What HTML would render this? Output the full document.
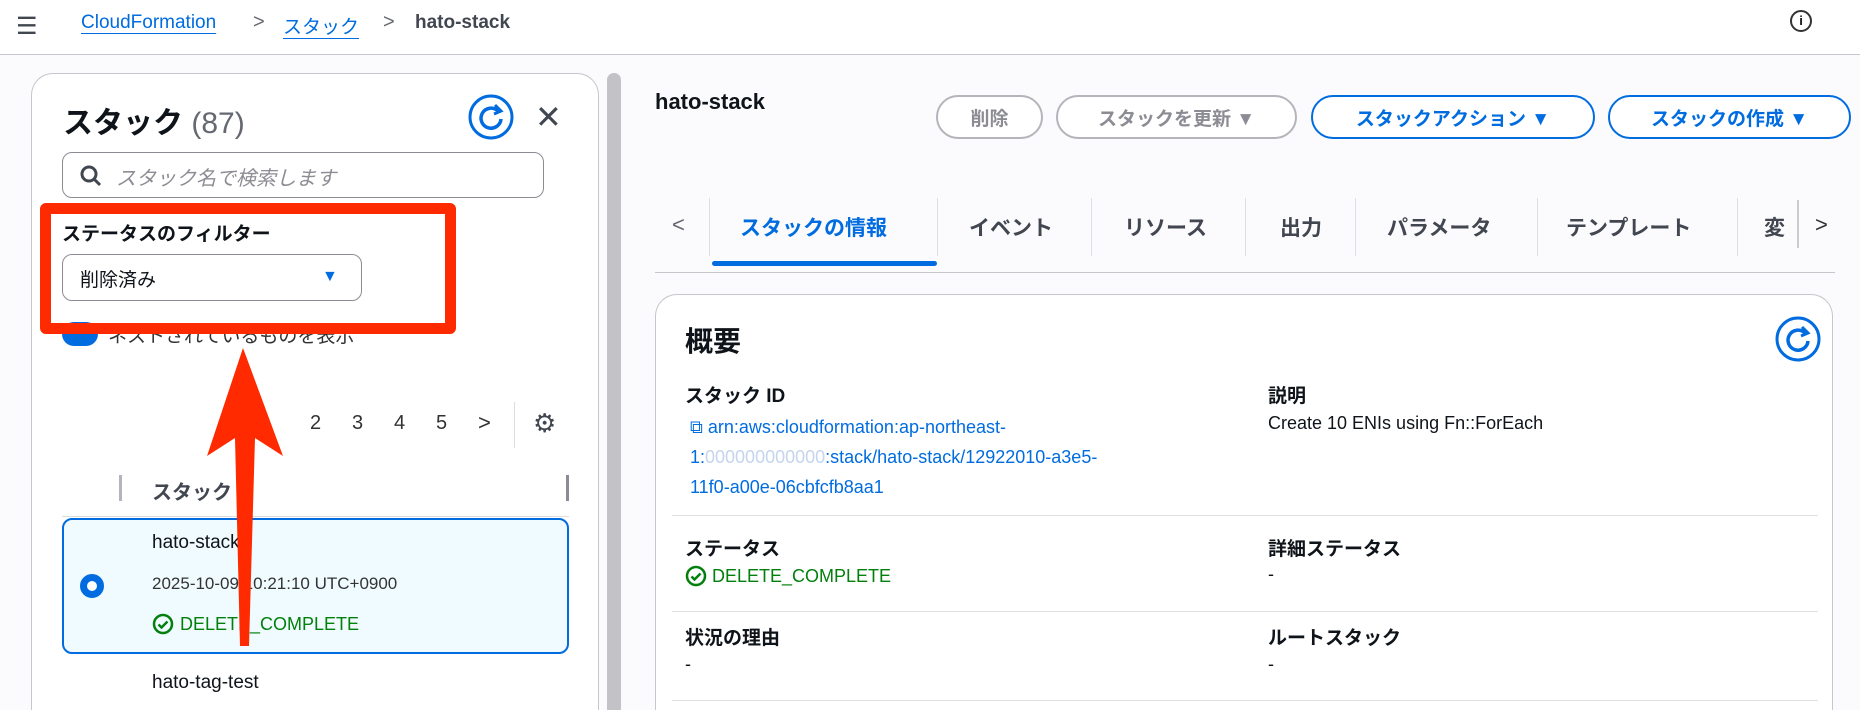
<!DOCTYPE html><html><head><meta charset="utf-8"><style>
*{box-sizing:border-box;margin:0;padding:0}
html,body{width:1860px;height:710px;overflow:hidden}
body{background:#fbfbfd;font-family:"Liberation Sans","Noto Sans CJK JP",sans-serif;color:#0f141a}
#w{position:relative;width:1860px;height:710px;overflow:hidden}
.a{position:absolute;white-space:nowrap}
.top{position:absolute;left:0;top:0;width:1860px;height:55px;background:#fff;border-bottom:1px solid #c6c6cd}
.lnk{color:#006ce0;text-decoration:underline;text-underline-offset:5px}
.btn{position:absolute;top:95px;height:44px;border-radius:22px;border:2px solid #006ce0;color:#006ce0;font-weight:bold;font-size:19px;display:flex;align-items:center;justify-content:center;background:#fff}
.btn.d{border-color:#b4b4bb;color:#8c8c94}
.tab{position:absolute;top:212px;font-size:21px;font-weight:bold;color:#424650}
.sep{position:absolute;top:198px;width:1px;height:58px;background:#dedee3}
.lbl{font-weight:bold;font-size:19px}
.v{font-size:18px}
</style></head><body><div id="w">
<div class="top"></div>
<div class="a" style="left:16px;top:12px;font-size:24px;color:#414750">☰</div>
<div class="a lnk" style="left:81px;top:12px;font-size:19px">CloudFormation</div>
<div class="a" style="left:253px;top:11px;font-size:20px;color:#656871">&gt;</div>
<div class="a lnk" style="left:283px;top:12px;font-size:19px">スタック</div>
<div class="a" style="left:383px;top:11px;font-size:20px;color:#656871">&gt;</div>
<div class="a" style="left:415px;top:12px;font-size:19px;font-weight:bold;color:#414750">hato-stack</div>
<div class="a" style="left:1790px;top:10px;width:22px;height:22px;border:2px solid #333;border-radius:50%;font-size:13px;font-weight:bold;text-align:center;line-height:18px">i</div>

<div class="a" style="left:31px;top:73px;width:568px;height:637px;background:#fff;border:1px solid #c6c6cd;border-bottom:none;border-radius:22px 22px 0 0"></div>
<div class="a" style="left:607px;top:73px;width:14px;height:637px;background:#c3c3c7;border-radius:7px 7px 0 0"></div>
<div class="a" style="left:63px;top:98px;font-size:30px;font-weight:bold">スタック <span style="font-weight:normal;color:#656871">(87)</span></div>
<svg class="a" style="left:468px;top:94px" width="46" height="46"><circle cx="23" cy="23" r="21" fill="none" stroke="#006ce0" stroke-width="3"/><path d="M30 17 A10 10 0 1 0 33 25" fill="none" stroke="#006ce0" stroke-width="3.5"/><path d="M27 11 L33 17 L26 20" fill="none" stroke="#006ce0" stroke-width="3"/></svg>
<div class="a" style="left:535px;top:98px;font-size:32px;color:#414750">✕</div>
<div class="a" style="left:62px;top:152px;width:482px;height:46px;border:1px solid #8c8c94;border-radius:10px"></div>
<svg class="a" style="left:79px;top:164px" width="24" height="24"><circle cx="10" cy="10" r="7" fill="none" stroke="#414750" stroke-width="3"/><path d="M15 15l6 6" stroke="#414750" stroke-width="3"/></svg>
<div class="a" style="left:116px;top:162px;font-size:20px;color:#8c8c94;font-style:italic">スタック名で検索します</div>
<div class="a lbl" style="left:62px;top:219px">ステータスのフィルター</div>
<div class="a" style="left:62px;top:254px;width:300px;height:47px;border:1px solid #8c8c94;border-radius:10px"></div>
<div class="a" style="left:80px;top:265px;font-size:19px">削除済み</div>
<div class="a" style="left:322px;top:268px;font-size:16px;color:#006ce0">▼</div>
<div class="a" style="left:62px;top:322px;width:36px;height:24px;border-radius:12px;background:#006ce0"></div>
<div class="a" style="left:108px;top:321px;font-size:19px;color:#333">ネストされているものを表示</div>
<div class="a" style="left:40px;top:203px;width:416px;height:131px;border:11px solid #ff2a00;border-radius:6px"></div>
<div class="a" style="left:310px;top:412px;font-size:20px;color:#333">2</div>
<div class="a" style="left:352px;top:412px;font-size:20px;color:#333">3</div>
<div class="a" style="left:394px;top:412px;font-size:20px;color:#333">4</div>
<div class="a" style="left:436px;top:412px;font-size:20px;color:#333">5</div>
<div class="a" style="left:478px;top:410px;font-size:22px;color:#333">&gt;</div>
<div class="a" style="left:514px;top:402px;width:1px;height:46px;background:#ddd"></div>
<div class="a" style="left:533px;top:408px;font-size:26px;color:#414750">⚙</div>
<div class="a" style="left:119px;top:475px;width:3px;height:26px;background:#b4b4bb"></div>
<div class="a" style="left:566px;top:475px;width:3px;height:26px;background:#8c8c94"></div>
<div class="a" style="left:152px;top:476px;font-size:20px;font-weight:bold;color:#424650">スタック</div>
<div class="a" style="left:62px;top:516px;width:507px;height:1px;background:#ddd"></div>
<div class="a" style="left:62px;top:518px;width:507px;height:136px;border:2px solid #006ce0;border-radius:10px;background:#f0fbff"></div>
<div class="a" style="left:80px;top:574px;width:24px;height:24px;border:7px solid #006ce0;border-radius:50%;background:#fff"></div>
<div class="a" style="left:152px;top:532px;font-size:19px">hato-stack</div>
<div class="a" style="left:152px;top:574px;font-size:17px;color:#333">2025-10-09 10:21:10 UTC+0900</div>
<svg class="a" style="left:152px;top:613px" width="22" height="22"><circle cx="11" cy="11" r="9" fill="none" stroke="#037f0c" stroke-width="2.5"/><path d="M6.5 11.5l3 3 6-6" fill="none" stroke="#037f0c" stroke-width="2.5"/></svg>
<div class="a" style="left:180px;top:614px;font-size:18px;color:#037f0c">DELETE_COMPLETE</div>
<div class="a" style="left:152px;top:672px;font-size:19px">hato-tag-test</div>
<svg class="a" style="left:205px;top:348px" width="80" height="305"><path d="M38 0 L78 108 L50 90 L44 298 L35 298 L30 90 L2 108 Z" fill="#ff2a00"/></svg>

<div class="a" style="left:655px;top:89px;font-size:22px;font-weight:bold">hato-stack</div>
<div class="btn d" style="left:936px;width:107px">削除</div>
<div class="btn d" style="left:1056px;width:241px">スタックを更新 ▼</div>
<div class="btn" style="left:1311px;width:284px">スタックアクション ▼</div>
<div class="btn" style="left:1608px;width:243px">スタックの作成 ▼</div>
<div class="a" style="left:672px;top:212px;font-size:22px;color:#656871">&lt;</div>
<div class="sep" style="left:709px"></div>
<div class="tab" style="left:740px;color:#006ce0">スタックの情報</div>
<div class="a" style="left:712px;top:261px;width:225px;height:5px;background:#006ce0;border-radius:3px"></div>
<div class="sep" style="left:937px"></div>
<div class="tab" style="left:969px">イベント</div>
<div class="sep" style="left:1091px"></div>
<div class="tab" style="left:1124px">リソース</div>
<div class="sep" style="left:1245px"></div>
<div class="tab" style="left:1280px">出力</div>
<div class="sep" style="left:1355px"></div>
<div class="tab" style="left:1387px">パラメータ</div>
<div class="sep" style="left:1537px"></div>
<div class="tab" style="left:1566px">テンプレート</div>
<div class="sep" style="left:1737px"></div>
<div class="tab" style="left:1764px">変</div>
<div class="a" style="left:1797px;top:200px;width:2px;height:48px;background:#ccc"></div>
<div class="a" style="left:1815px;top:212px;font-size:22px;color:#333">&gt;</div>
<div class="a" style="left:655px;top:272px;width:1180px;height:1px;background:#c6c6cd"></div>
<div class="a" style="left:655px;top:294px;width:1178px;height:416px;background:#fff;border:1px solid #c6c6cd;border-bottom:none;border-radius:22px 22px 0 0"></div>
<div class="a" style="left:685px;top:320px;font-size:28px;font-weight:bold">概要</div>
<svg class="a" style="left:1775px;top:316px" width="46" height="46"><circle cx="23" cy="23" r="21" fill="none" stroke="#006ce0" stroke-width="3"/><path d="M30 17 A10 10 0 1 0 33 25" fill="none" stroke="#006ce0" stroke-width="3.5"/><path d="M27 11 L33 17 L26 20" fill="none" stroke="#006ce0" stroke-width="3"/></svg>
<div class="a lbl" style="left:685px;top:381px">スタック ID</div>
<div class="a v" style="left:690px;top:412px;color:#006ce0;line-height:30px;white-space:normal;width:520px">⧉ arn:aws:cloudformation:ap-northeast-<br>1:<span style="color:#c5d5ee">000000000000</span>:stack/hato-stack/12922010-a3e5-<br>11f0-a00e-06cbfcfb8aa1</div>
<div class="a lbl" style="left:1268px;top:381px">説明</div>
<div class="a v" style="left:1268px;top:413px">Create 10 ENIs using Fn::ForEach</div>
<div class="a" style="left:672px;top:515px;width:1146px;height:1px;background:#dedee3"></div>
<div class="a lbl" style="left:685px;top:534px">ステータス</div>
<svg class="a" style="left:685px;top:565px" width="22" height="22"><circle cx="11" cy="11" r="9" fill="none" stroke="#037f0c" stroke-width="2.5"/><path d="M6.5 11.5l3 3 6-6" fill="none" stroke="#037f0c" stroke-width="2.5"/></svg>
<div class="a v" style="left:712px;top:566px;color:#037f0c">DELETE_COMPLETE</div>
<div class="a lbl" style="left:1268px;top:534px">詳細ステータス</div>
<div class="a v" style="left:1268px;top:564px">-</div>
<div class="a" style="left:672px;top:611px;width:1146px;height:1px;background:#dedee3"></div>
<div class="a lbl" style="left:685px;top:623px">状況の理由</div>
<div class="a v" style="left:685px;top:654px">-</div>
<div class="a lbl" style="left:1268px;top:623px">ルートスタック</div>
<div class="a v" style="left:1268px;top:654px">-</div>
<div class="a" style="left:672px;top:700px;width:1146px;height:1px;background:#dedee3"></div>
</div></body></html>
